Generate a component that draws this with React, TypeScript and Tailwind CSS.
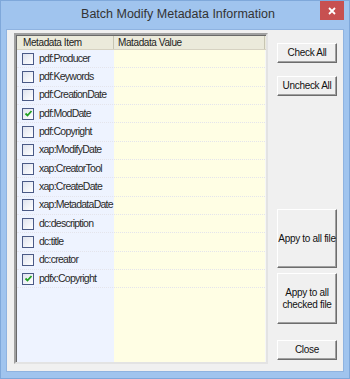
import { useState } from "react";

const ITEMS = [
    { name: "pdf:Producer", checked: false },
    { name: "pdf:Keywords", checked: false },
    { name: "pdf:CreationDate", checked: false },
    { name: "pdf:ModDate", checked: true },
    { name: "pdf:Copyright", checked: false },
    { name: "xap:ModifyDate", checked: false },
    { name: "xap:CreatorTool", checked: false },
    { name: "xap:CreateDate", checked: false },
    { name: "xap:MetadataDate", checked: false },
    { name: "dc:description", checked: false },
    { name: "dc:title", checked: false },
    { name: "dc:creator", checked: false },
    { name: "pdfx:Copyright", checked: true },
];

const font = "font-['Liberation_Sans',Arial,sans-serif]";

function Checkbox({ checked, onClick }: { checked: boolean; onClick: () => void }) {
    return (
        <button onClick={onClick} className="w-[12px] h-[12px] shrink-0 border border-[#4b5a86] bg-gradient-to-br from-[#dfe3ee] to-white flex items-center justify-center p-0">
            {checked && (
                <svg width="9" height="9" viewBox="0 0 9 9"><path d="M1.5 4.5 L3.5 6.5 L7.5 2" fill="none" stroke="#21a121" strokeWidth={1.8} /></svg>
            )}
        </button>
    );
}

function WinButton({ children, className }: { children: React.ReactNode; className: string }) {
    return (
        <button className={`w-[60px] shrink-0 bg-[#f0f0f0] border border-t-white border-l-white border-r-[#6d6d6d] border-b-[#6d6d6d] shadow-[inset_-1px_-1px_0_#a0a0a0] text-[10px] leading-[12px] tracking-[-0.3px] text-[#111] flex items-center justify-center text-center ${className}`}>
            {children}
        </button>
    );
}

export default function App() {
    const [items, setItems] = useState(ITEMS);
    const toggle = (i: number) => setItems((prev) => prev.map((it, j) => (j === i ? { ...it, checked: !it.checked } : it)));

    return (
        <div className={`w-[350px] h-[379px] bg-[#a0c4ee] border border-[#7fa8da] flex flex-col ${font}`}>
            {/* Title bar */}
            <div className="h-[28px] shrink-0 flex items-start relative">
                <div className="flex-1 text-center text-[12.5px] leading-[26px] text-[#333] pl-[6px]">Batch Modify Metadata Information</div>
                <div className="absolute right-[5px] top-0 w-[24px] h-[19px] bg-[#c75050] flex items-center justify-center">
                    <svg width="8" height="8" viewBox="0 0 8 8"><path d="M1 1 L7 7 M7 1 L1 7" stroke="white" strokeWidth={1.8} /></svg>
                </div>
            </div>

            {/* Client area */}
            <div className="flex-1 mx-[5px] mb-[6px] bg-[#f0f0f0] flex pl-[7px] pt-[3px] border border-[#8fb3e0]">
                {/* List view */}
                <div className="w-[254px] h-[331px] shrink-0 border-2 border-t-[#a0a0a0] border-l-[#a0a0a0] border-r-[#e3e3e3] border-b-[#e3e3e3] shadow-[inset_1px_1px_0_#696969] bg-[#f6f6f6] flex flex-col relative overflow-hidden pl-[1px] pt-[1px]">
                    <div className="absolute left-[1px] top-[15px] bottom-0 w-[97px] bg-[#eef3ff]" />
                    <div className="absolute left-[98px] top-[15px] bottom-0 w-[151px] bg-[#fffee4]" />
                    {/* Header */}
                    <div className="h-[14px] shrink-0 flex bg-[#ebeadb] border-b border-[#d6d2c2] text-[10px] leading-[13px] tracking-[-0.4px] text-[#222] relative">
                        <div className="w-[97px] pl-[6px] border-r border-[#c7c5b2]">Metadata Item</div>
                        <div className="w-[151px] pl-[4px] border-r border-[#c7c5b2]">Matadata Value</div>
                    </div>
                    {/* Rows */}
                    <div className="flex flex-col relative">
                        {items.map((it, i) => (
                            <div key={it.name} className="h-[18.33px] flex border-b border-dotted border-[#e4e4ec] w-[248px]">
                                <div className="w-[97px] flex items-center pl-[5px] gap-[5px]">
                                    <Checkbox checked={it.checked} onClick={() => toggle(i)} />
                                    <span className="text-[10.5px] tracking-[-0.75px] text-[#2a2a2a] whitespace-nowrap">{it.name}</span>
                                </div>
                                <div className="flex-1" />
                            </div>
                        ))}
                    </div>
                </div>

                {/* Buttons */}
                <div className="flex flex-col ml-[9px] pt-[10px]">
                    <WinButton className="h-[20px]">Check All</WinButton>
                    <WinButton className="h-[20px] mt-[13px]">Uncheck All</WinButton>
                    <WinButton className="h-[59px] mt-[113px]">Appy to all file</WinButton>
                    <WinButton className="h-[51px] mt-[5px]">Appy to all<br />checked file</WinButton>
                    <WinButton className="h-[20px] mt-[16px]">Close</WinButton>
                </div>
            </div>
        </div>
    );
}
